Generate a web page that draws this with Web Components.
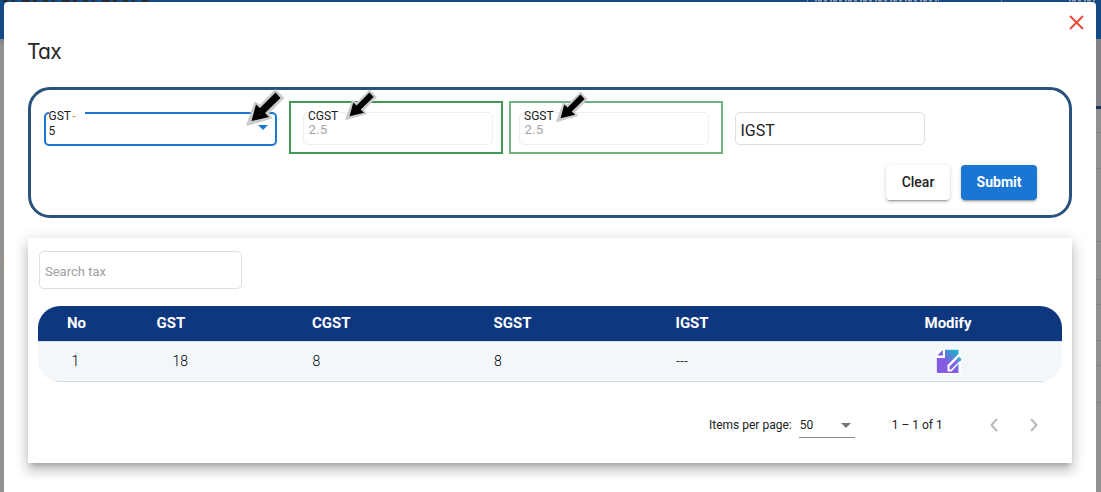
<!DOCTYPE html>
<html lang="en">
<head>
<meta charset="utf-8">
<title>Tax</title>
<style>
html,body{margin:0;height:492px;overflow:hidden}
body{font-family:Roboto,"Liberation Sans",sans-serif;color:#212121}
</style>
</head>
<body>
<tax-page></tax-page>
<script>
const define = (name, html, setup) => customElements.define(name, class extends HTMLElement {
  constructor() {
    super();
    const t = document.createElement('template');
    t.innerHTML = html;
    this.attachShadow({mode: 'open'}).append(t.content.cloneNode(true));
  }
  connectedCallback() { if (setup) setup(this, this.shadowRoot); }
});

define('pointer-arrow', `<style>:host{display:block;position:absolute;z-index:3;pointer-events:none}svg{display:block;width:100%;height:100%;overflow:visible}</style>
<svg viewBox="0 0 38 38"><path d="M1 38 9 15.500 14 18.500 29.500 3 37.500 11 22 26.500 25.500 31Z" fill="#cbcbcb" stroke="#cbcbcb" stroke-width="1.500" stroke-linejoin="round"/><path d="M5.500 34 10 17.500 14 21 29.500 5.500 34.500 11 19 26 23 30Z" fill="#000"/></svg>`);

define('outlined-field', `<style>
:host{display:block;position:relative;box-sizing:border-box;width:190px;height:33px;border:1px solid #dedede;border-radius:5px;font-size:16px;line-height:36px;padding-left:4.500px;white-space:nowrap}
:host([disabled]){border-color:#eee;color:#a5a5a5;font-size:13px;letter-spacing:.4px}
:host([focused]){width:233px;height:34px;border:2px solid #1976d2;padding-left:2.500px;font-size:12px}
:host([search]){width:203px;height:38px;font-size:13px;line-height:40px;color:#a0a0a0;padding-left:5px}
label{display:none;position:absolute;top:-5px;left:4px;background:#fff;font-size:12px;line-height:16px;color:#212121;letter-spacing:0;padding:0 1px 0 0}
:host([label]) label{display:block}
:host([label]) .value{display:block;line-height:15px;padding-top:9px}
:host([focused]) .value{padding-top:10px}
:host([focused]) label{top:-6px;left:2.500px;width:35.500px;height:14px}
i{display:none;font-style:normal;color:#ef8a31;margin-left:1px;font-size:10px;font-weight:700}
:host([focused]) i{display:inline}
svg{display:none;position:absolute;right:7px;top:11px}
:host([focused]) svg{display:block}
</style><label></label><span class="value"><slot></slot></span><svg width="10" height="5" viewBox="0 0 10 5"><path d="M0 0h10L5 5Z" fill="#1976d2"/></svg>`, (h, r) => {
  if (h.hasAttribute('label')) { const l = r.querySelector('label'); l.textContent = h.getAttribute('label'); if (h.hasAttribute('focused')) { const i = document.createElement('i'); i.textContent = '-'; l.append(i); } }
});

define('action-button', `<style>
:host{display:block;box-sizing:border-box;width:64px;height:35px;border-radius:4px;background:#fff;font-size:14px;font-weight:500;line-height:35px;text-align:center;box-shadow:0 3px 1px -2px rgba(0,0,0,.2),0 2px 2px rgba(0,0,0,.14),0 1px 5px rgba(0,0,0,.12)}
:host([primary]){width:76px;background:#1976d2;color:#fff;font-weight:700}
</style><slot></slot>`);

define('tax-form', `<style>
:host{display:block;box-sizing:border-box;width:1044px;height:131px;border:3px solid #29527c;border-radius:22px;padding:11px 32px 0 13px}
.fields{display:flex;height:53px}
.field{padding-top:11px}
.mark{box-sizing:border-box;width:214px;height:53px;border:2px solid #3f9a53;padding:9px 0 0 12px;margin-left:12px}
.mark.light{border-color:#70b27f;margin-left:6px;padding-left:8px}
.last{margin-left:12px}
.actions{display:flex;justify-content:flex-end;gap:11px;margin-top:11px}
</style>
<div class="fields"><div class="field"><outlined-field focused label="GST">5</outlined-field></div><div class="mark"><outlined-field disabled label="CGST">2.5</outlined-field></div><div class="mark light"><outlined-field disabled label="SGST">2.5</outlined-field></div><div class="field last"><outlined-field>IGST</outlined-field></div></div>
<div class="actions"><action-button>Clear</action-button><action-button primary>Submit</action-button></div>`);

define('edit-icon', `<style>:host{display:block;width:25px;height:25px}svg{display:block}</style>
<svg width="25" height="25" viewBox="0 0 25 25"><defs><linearGradient id="g" gradientUnits="userSpaceOnUse" x1="21" y1="1" x2="10" y2="13"><stop offset="0" stop-color="#13b5cb"/><stop offset="1" stop-color="#855be3"/></linearGradient></defs><path d="M0 0h25v25H0z" fill="#fff"/><path d="M9 .8h13.500V24H2Q.8 24 .8 22.800V9H9Z" fill="url(#g)"/><path d="M1.500 6.500 6.800 1v5.500Z" fill="#705fe0"/><path d="M11.500 16 22.500 5 25 7.500V12L15.500 22.500h-4Z" fill="#fff"/><path d="M13.500 20.500v-3L22 9l2.200 2.200-9 9.300Z" fill="#8064e2"/><path d="m20.500 10.500 2.700-2.700 1.800 1.700v2L22.700 13Z" fill="#39a2d6"/></svg>`);

define('tax-table', `<style>
:host{display:block;width:1024px;height:76px;border-radius:22px;overflow:hidden}
.row{display:grid;grid-template-columns:118.500px 155.500px 181.500px 182px 249px 1fr;box-sizing:border-box;height:36px;align-items:center}
.head{background:#0f377f;color:#fff;font-size:15px;font-weight:700;border-bottom:1px solid #dce3e9;line-height:33px}
.head span{padding-bottom:1px}
.body{height:40px;background:#f3f7fa;border-bottom:1px solid #d4d9dd;color:#000;font-size:14px;font-weight:300}
.body span{padding:0 0 1px .5px}
.head span:first-child{padding-left:29px}.body span:first-child{padding-left:33.500px}.body span:nth-child(2){padding-left:16px}
edit-icon{margin-left:11px}
</style><div class="row head"><span>No</span><span>GST</span><span>CGST</span><span>SGST</span><span>IGST</span><span>Modify</span></div>
<div class="row body"><span>1</span><span>18</span><span>8</span><span>8</span><span>---</span><edit-icon></edit-icon></div>`);

define('page-navigator', `<style>
:host{display:flex;align-items:center;height:40px;font-size:12px;color:#212121;padding-left:681px}
.size{display:flex;align-items:center;justify-content:space-between;box-sizing:border-box;width:56px;height:26px;border-bottom:1px solid #8c8c8c;padding:0 4px 0 1px;margin-left:7px}
.size svg{margin-top:2px}
.range{margin-left:37px;width:98px}
svg{display:block}.next{margin-left:32px}
</style><span>Items per page:</span><div class="size"><span>50</span><svg width="10" height="5"><path d="M0 0h10L5 5Z" fill="#757575"/></svg></div><span class="range">1 – 1 of 1</span><svg width="8" height="14"><path d="M7 1 1.500 7 7 13" fill="none" stroke="#b8b8b8" stroke-width="2"/></svg><svg class="next" width="8" height="14"><path d="m1 1 5.500 6L1 13" fill="none" stroke="#b8b8b8" stroke-width="2"/></svg>`);

define('tax-list', `<style>
:host{display:block;box-sizing:border-box;width:1044px;height:225px;background:#fff;padding:13px 0 0 10px;box-shadow:0 5px 5px -3px rgba(0,0,0,.2),0 8px 10px 1px rgba(0,0,0,.14),0 3px 14px 2px rgba(0,0,0,.12)}
outlined-field{margin-left:1px}tax-table{margin-top:17px}page-navigator{margin:23px 0 0 -10px}
</style><outlined-field search>Search tax</outlined-field><tax-table></tax-table><page-navigator></page-navigator>`);

define('tax-dialog', `<style>
:host{display:block;position:relative;box-sizing:border-box;width:1092px;height:490px;background:#fff;border-radius:4px 4px 0 0;padding:38px 24px 0}
h1{font:400 21px/24px Inter,sans-serif;font-feature-settings:"cv11";letter-spacing:-.8px;margin:0 0 23px -1px;color:#252525}
.close{position:absolute;left:1065px;top:13px}
tax-list{margin-top:20px}
.a{left:242px;top:85px;width:38px;height:38px}.b{left:341px;top:86px;width:31.500px;height:31.500px}.c{left:552px;top:88px;width:31.500px;height:31.500px}
</style><svg class="close" width="15" height="15"><path d="m1 1 13 13M14 1 1 14" stroke="#f44336" stroke-width="1.800"/></svg>
<h1>Tax</h1><tax-form></tax-form><tax-list></tax-list><pointer-arrow class="a"></pointer-arrow><pointer-arrow class="b"></pointer-arrow><pointer-arrow class="c"></pointer-arrow>`);

define('page-backdrop', `<style>:host{display:block;position:absolute;inset:0}svg{display:block}</style>
<svg width="1101" height="492"><path d="M0 0h1101v492H0z" fill="#929190"/><path d="M1096 39h5v67h-5z" fill="#818388"/><path d="M0 0h1101v39H0z" fill="#144b87"/><path d="M0 39h4v4H0z" fill="#858687"/><path d="M1096 106h5v3h-5z" fill="#173453"/>
<path d="M1096 132.500h5m-5 36h5m-5 73h5m-5 38h5m-5 25h5m-5 36h5m-5 25h5m-5 37h5" stroke="#828282"/>
<path d="M3 1h145" stroke="#262b34" stroke-width="2" stroke-dasharray="5 4 3 7 8 3 4 6"/>
<path d="M815 .8h124m130 0h26" stroke="#8e9bb0" stroke-width="1.500" stroke-dasharray="2 1 4 2 3 3"/><path d="M807.500 0v2m194-2v2" stroke="#6d89aa"/><path d="M3 257h1v12H3z" fill="#968a75"/></svg>`);

define('tax-page', `<style>
:host{display:block;position:relative;box-sizing:border-box;width:1101px;height:492px;padding:2px 5px 0 4px;overflow:hidden}
</style><page-backdrop></page-backdrop><tax-dialog></tax-dialog>`);
</script>
</body>
</html>
